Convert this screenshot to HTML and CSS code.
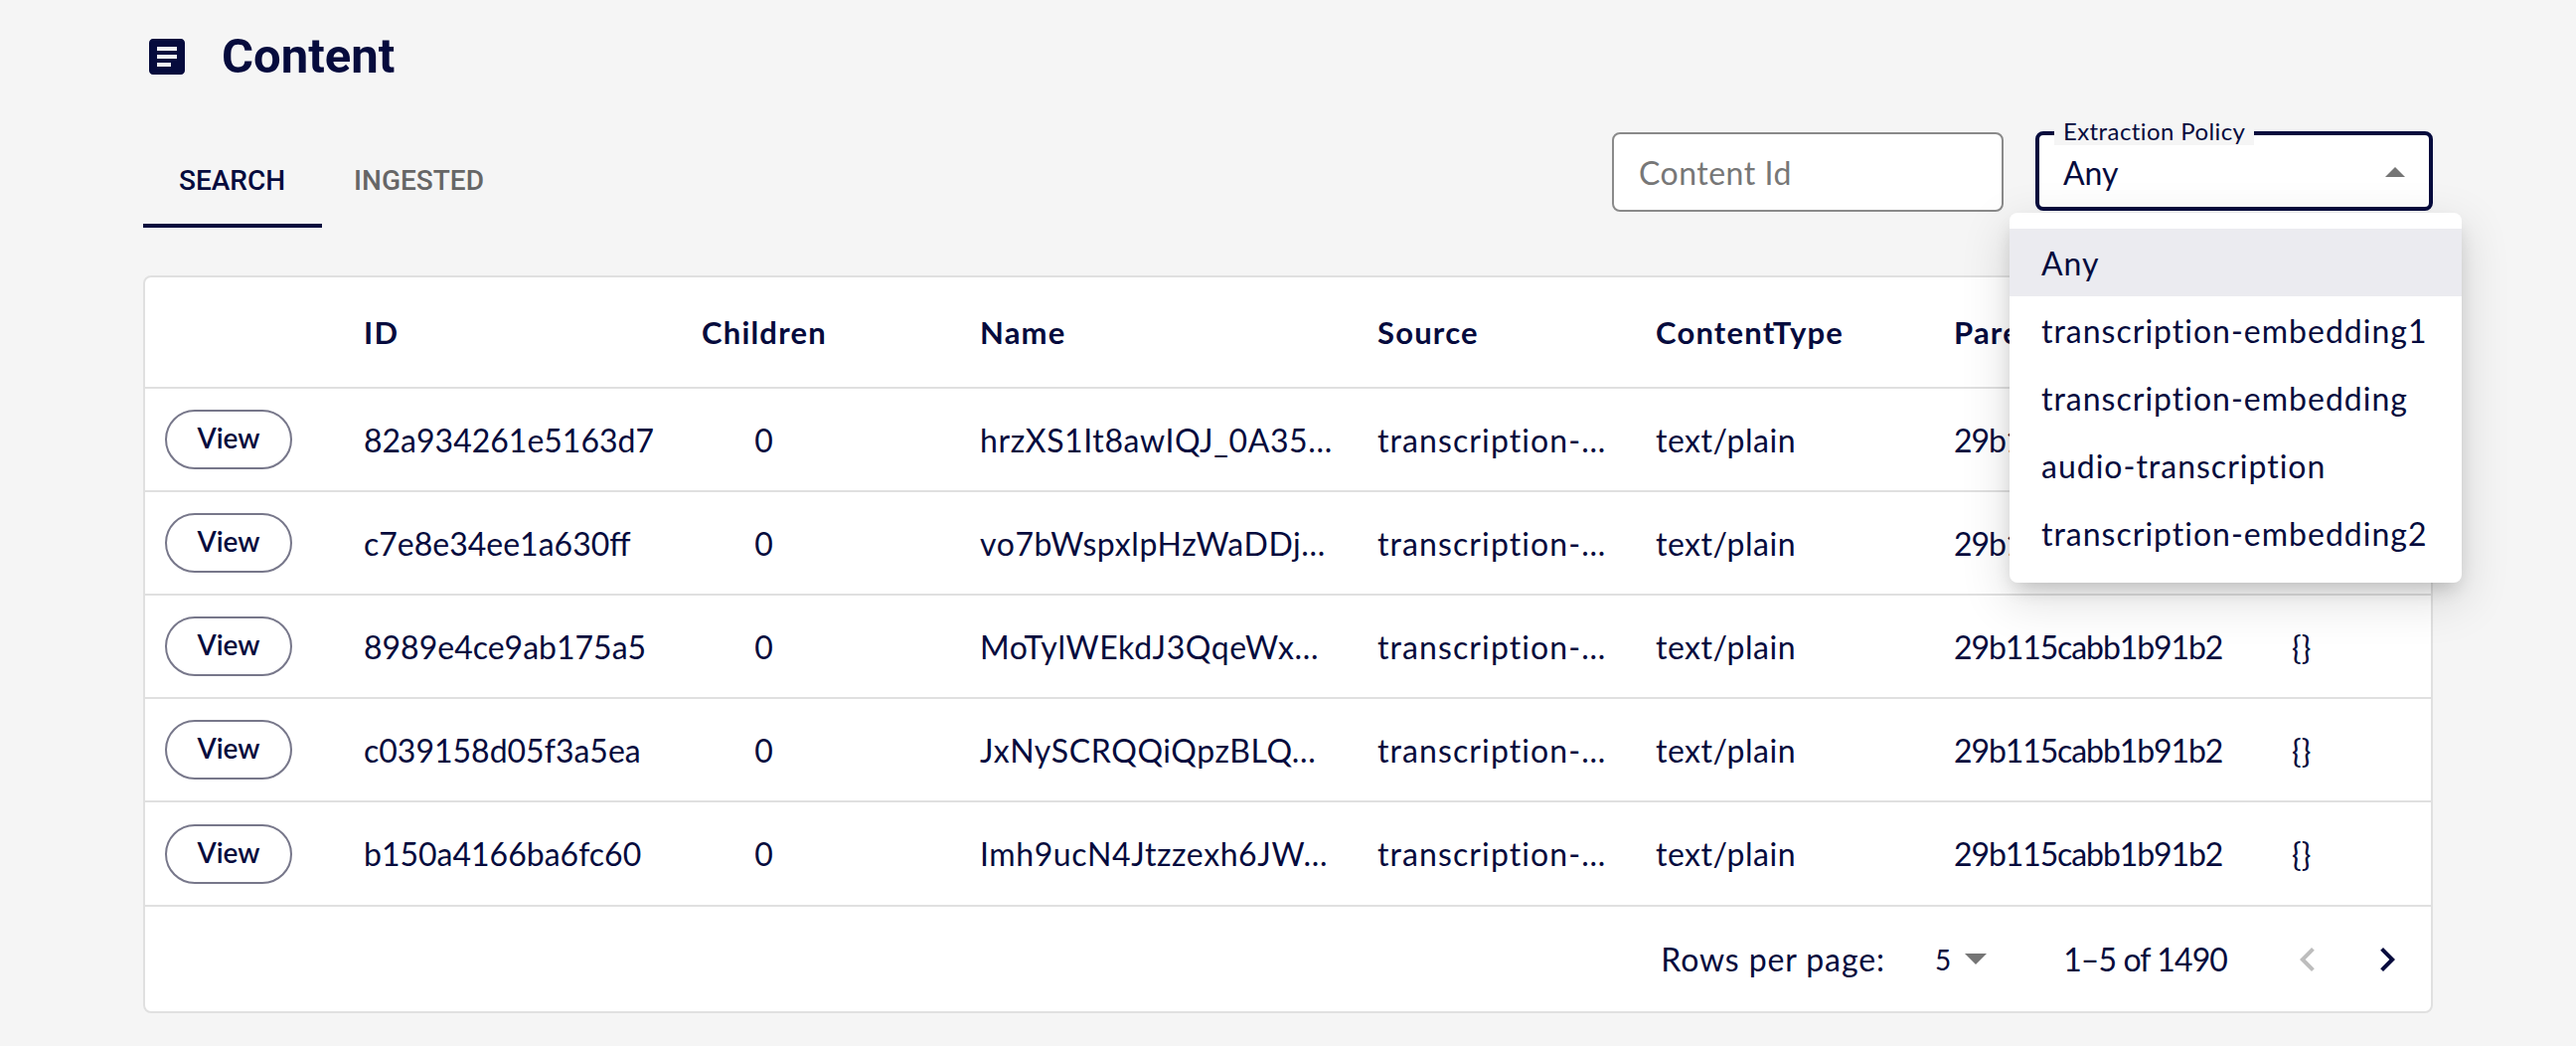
FILE: index.html
```html
<!DOCTYPE html>
<html lang="en">
<head>
  <meta charset="UTF-8">
  <title>Content</title>
  <link rel="stylesheet" href="styles.css">
</head>
<body>

<div class="page">
  <div class="title-row">
    <svg class="title-icon" viewBox="0 0 24 24"><path d="M19 3H5c-1.1 0-2 .9-2 2v14c0 1.1.9 2 2 2h14c1.1 0 2-.9 2-2V5c0-1.1-.9-2-2-2zm-5 14H7v-2h7v2zm3-4H7v-2h10v2zm0-4H7V7h10v2z"/></svg>
    <h1 class="title">Content</h1>
  </div>

  <div class="toolbar">
    <div class="tabs">
      <div class="tab active">SEARCH</div>
      <div class="tab">INGESTED</div>
    </div>
    <div class="filters">
      <div class="text-input">Content Id</div>
      <div class="select">
        <span class="select-label">Extraction Policy</span>
        <span>Any</span>
        <svg class="select-caret" viewBox="7 10 10 5"><path d="M7 15l5-5 5 5z"/></svg>
        <div class="menu">
          <div class="menu-item selected">Any</div>
          <div class="menu-item">transcription-embedding1</div>
          <div class="menu-item">transcription-embedding</div>
          <div class="menu-item">audio-transcription</div>
          <div class="menu-item">transcription-embedding2</div>
        </div>
      </div>
    </div>
  </div>

  <div class="card">
    <div class="row head">
      <div class="cell"></div>
      <div class="cell">ID</div>
      <div class="cell">Children</div>
      <div class="cell">Name</div>
      <div class="cell">Source</div>
      <div class="cell">ContentType</div>
      <div class="cell">Parent Id</div>
      <div class="cell">Labels</div>
    </div>
    <div class="row">
      <div class="cell"><button class="view-btn">View</button></div>
      <div class="cell">82a934261e5163d7</div>
      <div class="cell"><span class="count">0</span></div>
      <div class="cell name">hrzXS1It8awIQJ_0A35…</div>
      <div class="cell source">transcription-…</div>
      <div class="cell type">text/plain</div>
      <div class="cell parent">29b115cabb1b91b2</div>
      <div class="cell">{}</div>
    </div>
    <div class="row">
      <div class="cell"><button class="view-btn">View</button></div>
      <div class="cell">c7e8e34ee1a630ff</div>
      <div class="cell"><span class="count">0</span></div>
      <div class="cell name">vo7bWspxlpHzWaDDj…</div>
      <div class="cell source">transcription-…</div>
      <div class="cell type">text/plain</div>
      <div class="cell parent">29b115cabb1b91b2</div>
      <div class="cell">{}</div>
    </div>
    <div class="row">
      <div class="cell"><button class="view-btn">View</button></div>
      <div class="cell">8989e4ce9ab175a5</div>
      <div class="cell"><span class="count">0</span></div>
      <div class="cell name">MoTylWEkdJ3QqeWx…</div>
      <div class="cell source">transcription-…</div>
      <div class="cell type">text/plain</div>
      <div class="cell parent">29b115cabb1b91b2</div>
      <div class="cell">{}</div>
    </div>
    <div class="row">
      <div class="cell"><button class="view-btn">View</button></div>
      <div class="cell">c039158d05f3a5ea</div>
      <div class="cell"><span class="count">0</span></div>
      <div class="cell name">JxNySCRQQiQpzBLQ…</div>
      <div class="cell source">transcription-…</div>
      <div class="cell type">text/plain</div>
      <div class="cell parent">29b115cabb1b91b2</div>
      <div class="cell">{}</div>
    </div>
    <div class="row last">
      <div class="cell"><button class="view-btn">View</button></div>
      <div class="cell">b150a4166ba6fc60</div>
      <div class="cell"><span class="count">0</span></div>
      <div class="cell name">Imh9ucN4Jtzzexh6JW…</div>
      <div class="cell source">transcription-…</div>
      <div class="cell type">text/plain</div>
      <div class="cell parent">29b115cabb1b91b2</div>
      <div class="cell">{}</div>
    </div>

    <div class="pager">
      <span class="pager-label">Rows per page:</span>
      <span class="pager-size">5</span>
      <svg class="pager-caret" viewBox="7 10 10 5"><path d="M7 10l5 5 5-5z"/></svg>
      <span class="pager-range">1–5 of 1490</span>
      <svg class="pager-btn prev" viewBox="0 0 24 24"><path d="M15.41 16.59L10.83 12l4.58-4.59L14 6l-6 6 6 6 1.41-1.41z"/></svg>
      <svg class="pager-btn" viewBox="0 0 24 24"><path d="M8.59 16.59L13.17 12 8.59 7.41 10 6l6 6-6 6-1.41-1.41z"/></svg>
    </div>
  </div>
</div>

</body>
</html>
```

FILE: styles.css
```css
body {
  margin: 0;
  background-color: #f5f5f5;
  color: #060b3d;
  font-family: 'Lato', 'Noto Sans', sans-serif;
  font-size: 32px;
}
.page {
  padding: 30px 144px 0 144px;
}
.title-row {
  display: flex;
  align-items: center;
  height: 54px;
}
.title-icon {
  width: 48px;
  height: 48px;
  fill: #060b3d;
}
.title {
  margin: 0 0 0 31px;
  font-family: 'Roboto', sans-serif;
  font-size: 49px;
  font-weight: 700;
  line-height: 54px;
}
.toolbar {
  display: flex;
  justify-content: space-between;
  align-items: flex-start;
  margin-top: 48px;
}
.tabs {
  display: flex;
  margin-top: 1px;
}
.tab {
  height: 96px;
  box-sizing: border-box;
  padding: 0 36px;
  font-family: 'Roboto', sans-serif;
  font-size: 28px;
  font-weight: 500;
  line-height: 98px;
  color: #666666;
}
.tab + .tab {
  padding-left: 32px;
}
.tab.active {
  padding-right: 37px;
  color: #060b3d;
  border-bottom: 4px solid #060b3d;
}
.filters {
  display: flex;
  gap: 32px;
}
.text-input {
  width: 394px;
  height: 80px;
  box-sizing: border-box;
  margin-top: 1px;
  padding-left: 25px;
  background: white;
  border: 2px solid #8a8a8a;
  border-radius: 8px;
  color: #777777;
  letter-spacing: 0.5px;
  line-height: 78px;
}
.select {
  position: relative;
  z-index: 2;
  width: 400px;
  height: 80px;
  box-sizing: border-box;
  padding-left: 24px;
  background: white;
  border: 4px solid #060b3d;
  border-radius: 8px;
  line-height: 75px;
}
.select-label {
  position: absolute;
  top: -18px;
  left: 15px;
  padding: 0 9px;
  background: #f5f5f5;
  font-size: 24px;
  letter-spacing: 0.4px;
  line-height: 28px;
}
.select-caret {
  position: absolute;
  top: 32px;
  right: 24px;
  width: 20px;
  height: 10px;
  fill: #757575;
}
.menu {
  position: absolute;
  top: 78px;
  right: -33px;
  width: 455px;
  box-sizing: border-box;
  padding: 16px 0;
  background: white;
  border-radius: 8px;
  box-shadow: 0 10px 20px -6px rgba(0,0,0,0.2), 0 16px 48px 4px rgba(0,0,0,0.12);
}
.menu-item {
  height: 68px;
  padding-left: 32px;
  letter-spacing: 1px;
  line-height: 69px;
}
.menu-item.selected {
  background-color: #ebebf0;
}
.card {
  margin-top: 48px;
  background: white;
  border: 2px solid #e0e0e0;
  border-radius: 8px;
}
.row {
  display: grid;
  grid-template-columns: 200px 340px 280px 400px 280px 300px 340px 1fr;
  align-items: center;
  height: 104px;
  box-sizing: border-box;
  border-bottom: 2px solid #e0e0e0;
}
.row.head {
  height: 112px;
  font-weight: 700;
  font-size: 31px;
  letter-spacing: 1.2px;
}
.row.last {
  height: 105px;
}
.cell {
  padding-left: 20px;
  white-space: nowrap;
}
.name {
  letter-spacing: 0.6px;
}
.source {
  letter-spacing: 1.1px;
}
.type {
  letter-spacing: 0.5px;
}
.parent {
  letter-spacing: -1.1px;
}
.count {
  display: inline-block;
  width: 125px;
  text-align: center;
}
.view-btn {
  display: block;
  width: 128px;
  height: 60px;
  padding: 0 0 4px 0;
  background: white;
  border: 2px solid #77778a;
  border-radius: 30px;
  color: #060b3d;
  font-family: 'Lato', sans-serif;
  font-size: 28px;
  font-weight: 600;
}
.pager {
  display: flex;
  align-items: center;
  height: 105px;
  justify-content: flex-end;
  padding-right: 20px;
}
.pager-label {
  letter-spacing: 0.9px;
}
.pager-size {
  margin-left: 50px;
  font-size: 28px;
}
.pager-caret {
  width: 22px;
  height: 11px;
  margin-left: 14px;
  fill: #757575;
}
.pager-range {
  margin-left: 77px;
  letter-spacing: -0.9px;
}
.pager-btn {
  width: 48px;
  height: 48px;
  margin-left: 32px;
  fill: #060b3d;
}
.pager-btn.prev {
  margin-left: 57px;
  fill: #bdbdbd;
}
```
